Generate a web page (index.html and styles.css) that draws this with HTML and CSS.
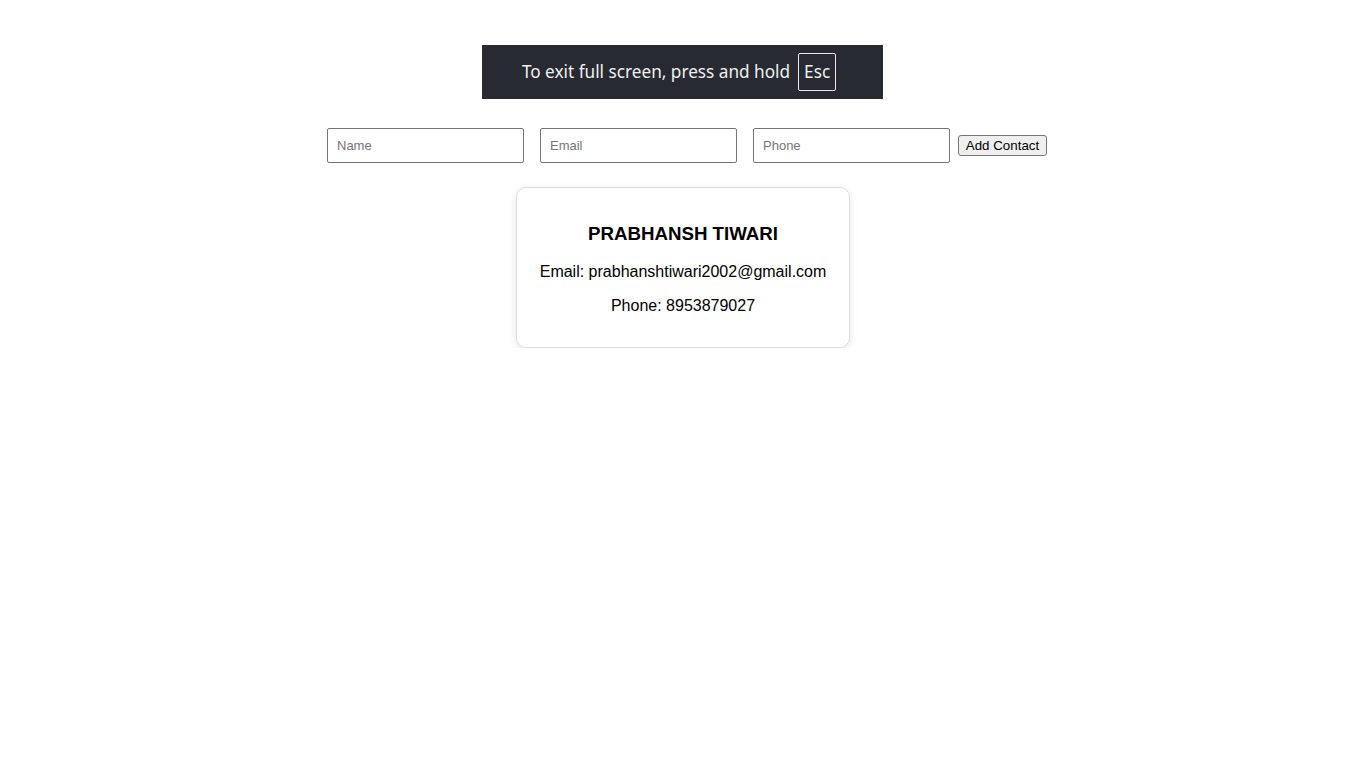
FILE: index.html
```html
<!DOCTYPE html>
<html lang="en">
<head>
<meta charset="utf-8">
<title>Contacts</title>
<link rel="stylesheet" href="styles.css">
</head>
<body>
<div class="fs-banner">
  <span class="fs-text">To exit full screen, press and hold</span>
  <span class="fs-key">Esc</span>
</div>
<div class="app">
  <form class="contact-form">
    <input class="field" type="text" placeholder="Name">
    <input class="field" type="email" placeholder="Email">
    <input class="field" type="tel" placeholder="Phone">
    <button class="add-btn" type="button">Add Contact</button>
  </form>
  <div class="card">
    <h3 class="card-name">PRABHANSH TIWARI</h3>
    <p class="card-line">Email: prabhanshtiwari2002@gmail.com</p>
    <p class="card-line">Phone: 8953879027</p>
  </div>
</div>
</body>
</html>
```
FILE: styles.css
```css
html, body {
  margin: 0;
  padding: 0;
  background: #ffffff;
}
body {
  font-family: "Liberation Sans", Arial, sans-serif;
  color: #000;
}
.fs-banner {
  position: absolute;
  top: 45px;
  left: 482px;
  width: 401px;
  height: 54px;
  box-sizing: border-box;
  background: #272a31;
  display: flex;
  align-items: center;
  justify-content: center;
  padding: 0 7px 0 0;
  color: #eef0f2;
  font-family: "Noto Sans", "Open Sans", sans-serif;
  font-size: 17.2px;
  z-index: 10;
}
.fs-text {
  margin-bottom: 1px;
}
.fs-key {
  margin-left: 8px;
  width: 38px;
  height: 38px;
  box-sizing: border-box;
  border: 1px solid #e8e8e8;
  border-radius: 2px;
  display: flex;
  align-items: center;
  justify-content: center;
  padding-bottom: 1px;
}
.app {
  padding-top: 128px;
}
.contact-form {
  display: flex;
  justify-content: center;
  align-items: center;
  margin: 0 0 24px;
}
.field {
  margin: 0 8px;
  width: 197px;
  height: 35px;
  box-sizing: border-box;
  padding: 0 9px;
  border: 1px solid #767676;
  border-radius: 2px;
  font-family: "Liberation Sans", Arial, sans-serif;
  font-size: 13px;
}
.field::placeholder {
  color: #757575;
}
.add-btn {
  font-family: "Liberation Sans", Arial, sans-serif;
  font-size: 13.33px;
  height: 21px;
  width: 89px;
  padding: 1px 6px;
  border: 1px solid #767676;
  border-radius: 3px;
  background: #efefef;
  color: #000;
}
.card {
  width: 300px;
  margin: 0 auto;
  padding: 16px;
  border: 1px solid #ddd;
  border-radius: 10px;
  box-shadow: 0 2px 8px rgba(0, 0, 0, 0.1);
  text-align: center;
}
.card-name {
  font-size: 18.72px;
  font-weight: bold;
  margin: 18.72px 0;
}
.card-line {
  font-size: 16px;
  margin: 16px 0;
}
```
